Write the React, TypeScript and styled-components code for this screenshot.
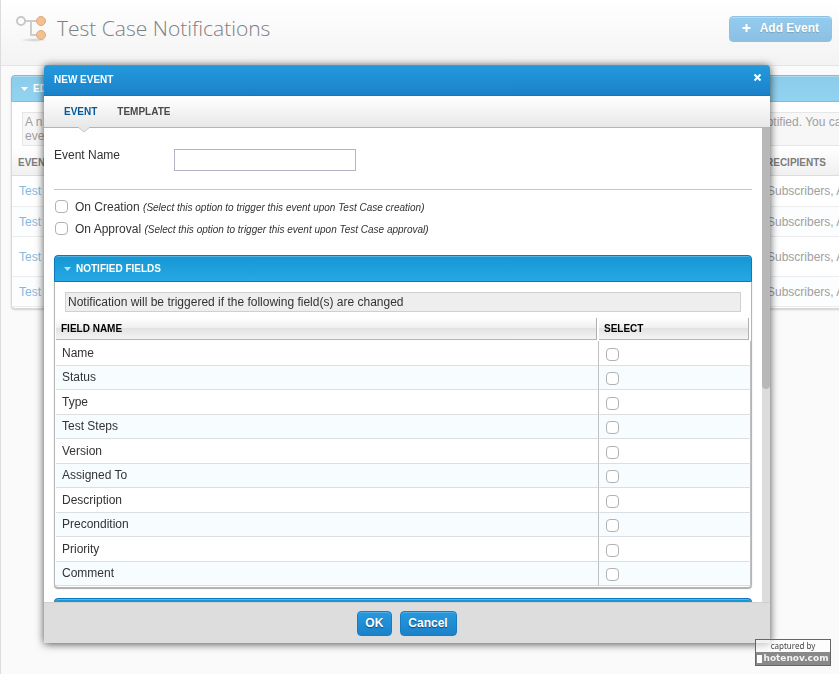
import React, { useState } from "react";
import styled, { createGlobalStyle } from "styled-components";

const GlobalStyle = createGlobalStyle`
  * { box-sizing: border-box; }
  html, body { margin: 0; padding: 0; height: 100%; overflow: hidden; }
  body {
    background: #fafafa;
    color: #333;
    font: 12px/14px "Liberation Sans", Arial, sans-serif;
  }
  button, input { font: inherit; }
`;

/* Page behind the dialog */

const Page = styled.div`
  height: 100vh;
  overflow: hidden;
  border-left: 1px solid #dcdcdc;
  color: #a0a0a0;
`;

const PageHeader = styled.header`
  display: flex;
  align-items: flex-start;
  height: 66px;
  padding: 14px 7px 0 14px;
  background: linear-gradient(#fff, #f3f3f3);
  border-bottom: 1px solid #e4e4e4;
`;

const PageTitle = styled.h1`
  flex: 1;
  margin: 0 0 0 9px;
  font: 300 21px/28px "Open Sans", sans-serif;
  color: #808080;
`;

const AddButton = styled.button`
  display: flex;
  align-items: center;
  gap: 9px;
  height: 26px;
  margin-top: 2px;
  padding: 0 12px 2px;
  border: 1px solid #8fc1e4;
  border-radius: 4px;
  background: linear-gradient(#93cbee, #8cc0e3);
  box-shadow: inset 0 1px 0 #b5dbf3;
  color: #fff;
  font-weight: bold;
  text-shadow: 0 1px 1px #7b9fb8;
`;

const BackPanel = styled.section`
  margin: 9px -220px 0 10px;
  padding-bottom: 1px;
  border: 1px solid #d8d8d8;
  border-radius: 4px;
  background: #fff;
  box-shadow: 0 1px 2px #d0d0d0;
`;

const BackPanelTitle = styled.h2`
  display: flex;
  align-items: center;
  gap: 4px;
  height: 27px;
  margin: -1px -1px 10px;
  padding: 0 8px;
  border: 1px solid #80bde0;
  border-radius: 4px 4px 0 0;
  background: linear-gradient(#8accea, #93d3f2);
  box-shadow: inset 0 1px 0 #a9daf1;
  color: #fff;
  font-size: 10px;
`;

const BackNote = styled.div`
  display: grid;
  grid-template-columns: 735px 1fr;
  height: 34px;
  margin: 0 10px 1px;
  padding: 2px;
  border: 1px solid #e6e6e6;
  background: #f7f7f7;
`;

const BackTable = styled.table`
  width: 100%;
  table-layout: fixed;
  border-collapse: separate;
  border-spacing: 0;
  th {
    width: 748px;
    height: 29px;
    padding: 3px 6px 0;
    border-bottom: 1px solid #ddd;
    background: linear-gradient(#fff, #f0f0f0);
    color: #7c7c7c;
    font-size: 10px;
    text-align: left;
  }
  th + th { width: auto; }
  td {
    padding: 0 7px;
    border-bottom: 1px solid #ececec;
  }
  tr:nth-child(even) td { background: #fbfdfe; }
`;

const BackRow = styled.tr<{ $tall?: boolean }>`
  height: ${(p) => (p.$tall ? 40 : 30)}px;
  &:first-child { height: 31px; }
`;

const BackLink = styled.a`
  color: #8ab8dc;
  text-decoration: none;
`;

/* Dialog */

const Overlay = styled.div`
  position: fixed;
  inset: 0;
  display: flex;
  padding: 65px 69px 31px 44px;
`;

const Dialog = styled.div`
  flex: 1;
  min-width: 0;
  display: flex;
  flex-direction: column;
  border-radius: 4px 4px 2px 2px;
  background: #fff;
  box-shadow: 0 1px 8px rgba(0, 0, 0, 0.7);
`;

const DialogHeader = styled.header`
  display: flex;
  align-items: center;
  justify-content: space-between;
  flex: none;
  height: 31px;
  padding: 0 8px 0 10px;
  border-bottom: 1px solid #1b75b8;
  border-radius: 4px 4px 0 0;
  background: linear-gradient(#239ade, #1b82c9);
  box-shadow: inset 0 1px 0 #3a9bd8;
  color: #fff;
`;

const DialogTitle = styled.h2`
  margin: 0;
  font-size: 10px;
`;

const CloseButton = styled.button`
  display: flex;
  margin-bottom: 6px;
  padding: 0;
  border: 0;
  background: none;
  color: inherit;
`;

const Tabs = styled.div`
  display: flex;
  flex: none;
  gap: 20px;
  height: 32px;
  padding: 0 20px;
  border-bottom: 1px solid #b4b4b4;
  background: linear-gradient(#fff, #e8e8e8);
`;

const Tab = styled.button<{ $active?: boolean }>`
  position: relative;
  padding: 0;
  border: 0;
  background: none;
  color: ${(p) => (p.$active ? "#045a9c" : "#4a4a4a")};
  font-size: 10px;
  font-weight: bold;
`;

const TabPointer = styled.svg`
  position: absolute;
  top: 30px;
  left: 14px;
`;

const ScrollFrame = styled.div`
  display: flex;
  flex: 1;
  min-height: 0;
`;

const Content = styled.div`
  flex: 1;
  min-width: 0;
  padding: 21px 10px 0;
  overflow-y: auto;
  scrollbar-width: none;
`;

const Track = styled.div`
  flex: none;
  width: 8px;
  background: #dcdcdc;
`;

const Thumb = styled.div`
  height: 55%;
  border-radius: 0 0 4px 4px;
  background: #b8b8b8;
`;

const NameRow = styled.div`
  display: flex;
  height: 41px;
  margin-bottom: 6px;
  border-bottom: 1px solid #c6c6c6;
  label {
    width: 120px;
    line-height: 12px;
  }
`;

const TextBox = styled.input`
  width: 182px;
  height: 22px;
  padding: 2px 4px;
  border: 1px solid #b0b4c4;
  background: #fff;
`;

const CheckLabel = styled.label`
  display: flex;
  align-items: center;
  height: 22px;
  padding: 0 1px;
  gap: 7px;
  small {
    font-size: 10px;
    font-style: italic;
  }
`;

const CheckBox = styled.input.attrs({ type: "checkbox" })`
  appearance: none;
  display: block;
  flex: none;
  width: 13px;
  height: 13px;
  margin: 0;
  border: 1px solid #b2b2b2;
  border-radius: 4px;
  background: #fff;
  &:checked { background: #1b82c9; }
`;

const LabelledCheckBox = styled(CheckBox)`
  margin-bottom: 2px;
`;

const Panel = styled.section`
  margin-top: 10px;
  border: 1px solid #b4b4b4;
  border-radius: 4px;
  background: #fff;
  box-shadow: 0 1px 1px #aaa;
`;

const FieldsPanel = styled(Panel)`
  margin-top: 15px;
  padding-bottom: 1px;
`;

const PanelTitle = styled.h3`
  display: flex;
  align-items: center;
  gap: 4px;
  height: 27px;
  margin: -1px;
  padding: 0 8px;
  border: 1px solid #0f78bd;
  border-radius: 4px 4px 0 0;
  background: linear-gradient(#1597d4, #25a8e4);
  box-shadow: inset 0 1px 0 #55b5e4;
  color: #fff;
  font-size: 10px;
`;

const PanelBody = styled.div`
  height: 240px;
`;

const Note = styled.p`
  height: 20px;
  margin: 11px 10px 6px;
  padding: 2px;
  border: 1px solid #d0d0d0;
  background: #eee;
`;

const FieldTable = styled.table`
  width: 100%;
  table-layout: fixed;
  border-collapse: separate;
  border-spacing: 0;
  padding-left: 1px;
`;

const HeadCell = styled.th<{ $narrow?: boolean }>`
  width: ${(p) => (p.$narrow ? "152px" : "auto")};
  padding: 0 0 1px;
  color: #000;
  font-size: 10px;
  text-align: left;
  div {
    height: 22px;
    margin-right: 2px;
    padding: 4px 5px;
    border-right: 1px solid #b0b0b0;
    border-bottom: 1px solid #b4b4b4;
    background: linear-gradient(#fff, #eee 50%, #e2e2e2 50%, #f4f4f4);
  }
`;

const FieldRow = styled.tr`
  height: 25px;
  td {
    padding: 0 6px 1px;
    border-bottom: 1px solid #dcdfe2;
    border-right: 1px solid #c0c0c0;
  }
  td:last-child { padding: 2px 7px 0; }
  &:nth-child(even) {
    height: 24px;
    background: #f6fcff;
  }
`;

const Footer = styled.footer`
  display: flex;
  flex: none;
  justify-content: center;
  gap: 8px;
  height: 41px;
  padding-top: 8px;
  border-top: 1px solid #d0d0d0;
  border-radius: 0 0 2px 2px;
  background: #ddd;
`;

const ActionButton = styled.button`
  height: 25px;
  padding: 0 8px 2px 7px;
  border: 1px solid #1a7cc0;
  border-radius: 4px;
  background: linear-gradient(#2799df, #1b82c9);
  box-shadow: inset 0 1px 0 #4dade6;
  color: #fff;
  font-weight: bold;
  text-shadow: 0 1px 1px #0d4a78;
`;

const Watermark = styled.div`
  position: fixed;
  right: 8px;
  bottom: 8px;
  width: 76px;
  border: 1px solid #666;
  background: rgba(255, 255, 255, 0.6);
  color: #444;
  font: 8px/12px "Noto Sans", sans-serif;
  text-align: center;
`;

const WatermarkSite = styled.div`
  display: flex;
  align-items: center;
  justify-content: center;
  gap: 1px;
  height: 13px;
  background: #898989;
  color: #f4f4f4;
  font: bold 9px/13px "DejaVu Sans", sans-serif;
`;

const WatermarkBlock = styled.span`
  width: 5px;
  height: 8px;
  background: #fff;
`;

const LogoIcon = () => (
  <svg width="33" height="30" viewBox="0 0 33 30" fill="none">
    <defs>
      <radialGradient id="base">
        <stop offset="0" stopColor="#ccc" />
        <stop offset="1" stopColor="#ccc" stopOpacity="0" />
      </radialGradient>
    </defs>
    <ellipse cx="19" cy="26" rx="14" ry="2" fill="url(#base)" />
    <path d="M10 7h12M16 7v14h6" stroke="#cdcdcd" strokeWidth="2" />
    <circle cx="6" cy="7" r="4" stroke="#c8c8c8" strokeWidth="2" fill="#fff" />
    <circle cx="26" cy="7" r="4.5" fill="#f3c092" stroke="#dfaa7b" />
    <circle cx="26" cy="21" r="4.5" fill="#f3c092" stroke="#dfaa7b" />
  </svg>
);

const PlusIcon = () => (
  <svg width="9" height="8" viewBox="0 0 9 8" stroke="#fff" strokeWidth="2">
    <path d="M4.5 0v8M0.5 4h8" />
  </svg>
);

const Caret = ({ color }: { color: string }) => (
  <svg width="9" height="4" viewBox="0 0 9 4" fill={color}>
    <path d="M1 0h7L4.5 4z" />
  </svg>
);

const CloseIcon = () => (
  <svg width="9" height="9" viewBox="0 0 9 9" stroke="#fff" strokeWidth="2">
    <path d="M1.5 1.5l6 6M7.5 1.5l-6 6" />
  </svg>
);

const fields = [
  "Name",
  "Status",
  "Type",
  "Test Steps",
  "Version",
  "Assigned To",
  "Description",
  "Precondition",
  "Priority",
  "Comment",
];

const backRows = [false, false, true, false];

export default function App() {
  const [offset, setOffset] = useState(0);

  return (
    <>
      <GlobalStyle />
      <Page>
        <PageHeader>
          <LogoIcon />
          <PageTitle>Test Case Notifications</PageTitle>
          <AddButton>
            <PlusIcon />
            Add Event
          </AddButton>
        </PageHeader>
        <BackPanel>
          <BackPanelTitle>
            <Caret color="#fff" />
            EDIT
          </BackPanelTitle>
          <BackNote>
            <span>
              A n<br />
              event
            </span>
            <span>notified. You can</span>
          </BackNote>
          <BackTable>
            <thead>
              <tr>
                <th>EVENT</th>
                <th>RECIPIENTS</th>
              </tr>
            </thead>
            <tbody>
              {backRows.map((tall, i) => (
                <BackRow key={i} $tall={tall}>
                  <td>
                    <BackLink href="#">Test</BackLink>
                  </td>
                  <td>Subscribers, A</td>
                </BackRow>
              ))}
            </tbody>
          </BackTable>
        </BackPanel>
      </Page>

      <Overlay>
        <Dialog role="dialog" aria-labelledby="dialog-title">
          <DialogHeader>
            <DialogTitle id="dialog-title">NEW EVENT</DialogTitle>
            <CloseButton aria-label="Close">
              <CloseIcon />
            </CloseButton>
          </DialogHeader>
          <Tabs role="tablist">
            <Tab role="tab" aria-selected $active>
              EVENT
              <TabPointer width="12" height="7" viewBox="0 0 12 7">
                <path d="M0 0h12v1L6 6L0 1z" fill="#e8e8e8" />
                <path d="M0 1l6 5l6-5" fill="none" stroke="#c4c4c4" />
              </TabPointer>
            </Tab>
            <Tab role="tab" aria-selected={false}>
              TEMPLATE
            </Tab>
          </Tabs>
          <ScrollFrame>
            <Content
              onScroll={(e) => {
                const el = e.currentTarget;
                setOffset((el.scrollTop / el.scrollHeight) * el.clientHeight);
              }}
            >
              <NameRow>
                <label htmlFor="event-name">Event Name</label>
                <TextBox id="event-name" type="text" />
              </NameRow>
              <CheckLabel>
                <LabelledCheckBox />
                <span>
                  On Creation{" "}
                  <small>(Select this option to trigger this event upon Test Case creation)</small>
                </span>
              </CheckLabel>
              <CheckLabel>
                <LabelledCheckBox />
                <span>
                  On Approval{" "}
                  <small>(Select this option to trigger this event upon Test Case approval)</small>
                </span>
              </CheckLabel>
              <FieldsPanel>
                <PanelTitle>
                  <Caret color="#b9e2f6" />
                  NOTIFIED FIELDS
                </PanelTitle>
                <Note>Notification will be triggered if the following field(s) are changed</Note>
                <FieldTable>
                  <thead>
                    <tr>
                      <HeadCell>
                        <div>FIELD NAME</div>
                      </HeadCell>
                      <HeadCell $narrow>
                        <div>SELECT</div>
                      </HeadCell>
                    </tr>
                  </thead>
                  <tbody>
                    {fields.map((field) => (
                      <FieldRow key={field}>
                        <td>{field}</td>
                        <td>
                          <CheckBox aria-label={field} />
                        </td>
                      </FieldRow>
                    ))}
                  </tbody>
                </FieldTable>
              </FieldsPanel>
              <Panel>
                <PanelTitle />
                <PanelBody />
              </Panel>
            </Content>
            <Track>
              <Thumb style={{ transform: `translateY(${offset}px)` }} />
            </Track>
          </ScrollFrame>
          <Footer>
            <ActionButton>OK</ActionButton>
            <ActionButton>Cancel</ActionButton>
          </Footer>
        </Dialog>
      </Overlay>

      <Watermark>
        captured by
        <WatermarkSite>
          <WatermarkBlock />
          hotenov.com
        </WatermarkSite>
      </Watermark>
    </>
  );
}
